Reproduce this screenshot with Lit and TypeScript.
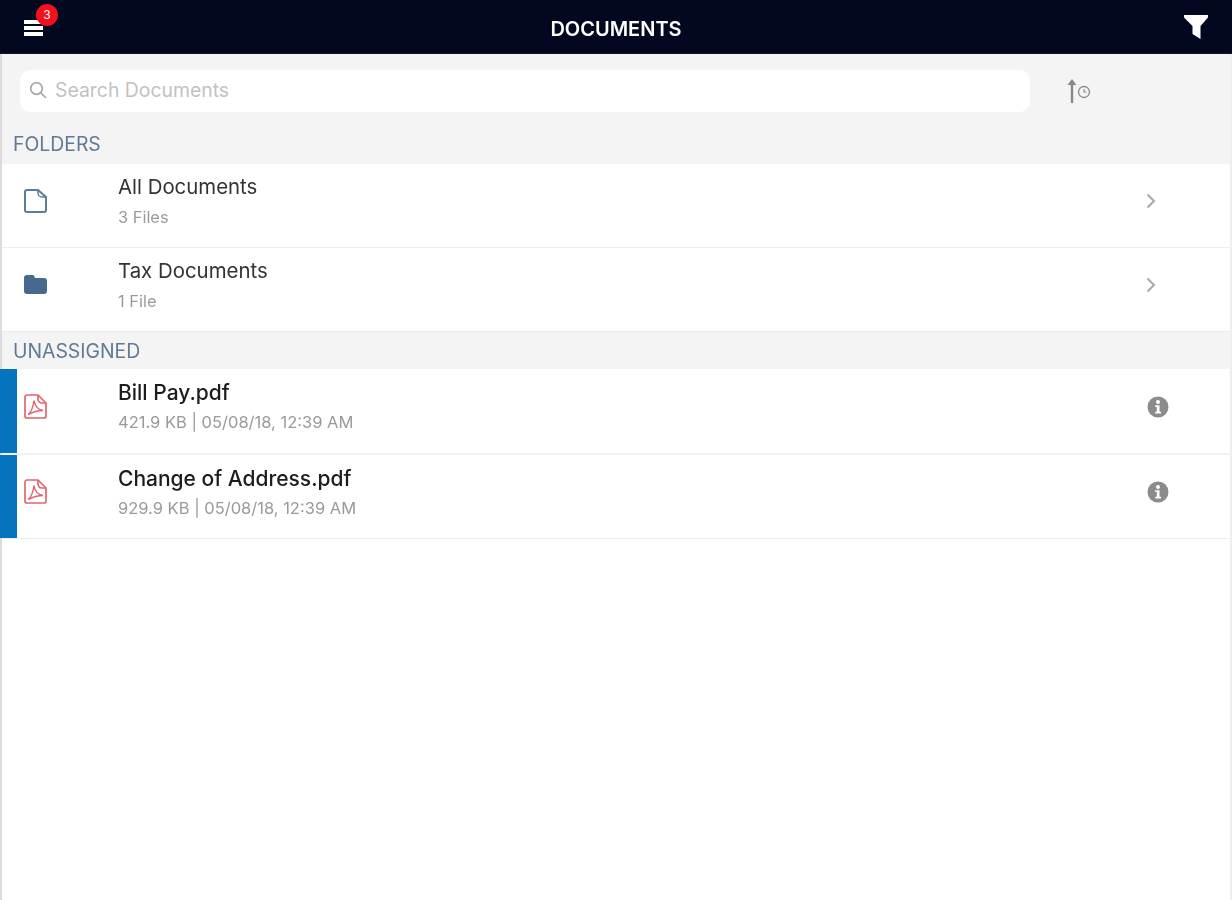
import { LitElement, html, css } from "lit";
import { customElement } from "lit/decorators.js";

const chevron = html`<svg class="trail chev" width="10" height="16" viewBox="0 0 10 16"><path d="M1.500 1.500 L8 8 L1.500 14.500" fill="none" stroke="#a8a8a8" stroke-width="2"/></svg>`;
const info = html`<svg class="trail info" width="22" height="22" viewBox="0 0 22 22"><circle cx="11" cy="11" r="10.500" fill="#8b8b8b"/><circle cx="11" cy="6" r="2" fill="#fff"/><path d="M8.200 9.200h4.300v6.600h1.500v1.700H8.200v-1.700h1.600v-4.900H8.200z" fill="#fff"/></svg>`;
const pdf = html`<svg width="23" height="25" viewBox="0 0 23 25" fill="none" stroke="#e0666c" stroke-width="1.700"><path d="M14 1H3a2 2 0 0 0-2 2v19a2 2 0 0 0 2 2h17a2 2 0 0 0 2-2V9z"/><path d="M14 1v4a4 4 0 0 0 4 4h4"/><path stroke-width="1.400" d="M4 20.500c2.500-1.500 5-7 6-14 .8 5 4 9 9 10-5 0-10 1.500-15 4z"/></svg>`;
const file = html`<svg width="23" height="24" viewBox="0 0 23 24" fill="none" stroke="#5b7c9c" stroke-width="2"><path d="M14 1H3a2 2 0 0 0-2 2v18a2 2 0 0 0 2 2h17a2 2 0 0 0 2-2V8z"/><path stroke-width="1.500" d="M14 1v3a4 4 0 0 0 4 4h4"/></svg>`;
const folder = html`<svg width="23" height="19" viewBox="0 0 23 19"><path fill="#47698c" d="M3 0h5.500a2 2 0 0 1 1.800 1.200L11 3h9a3 3 0 0 1 3 3v10a3 3 0 0 1-3 3H3a3 3 0 0 1-3-3V3a3 3 0 0 1 3-3z"/></svg>`;

@customElement("app-root")
export class AppRoot extends LitElement {
  static styles = css`
    :host { display: block; height: 900px; background: #fff; font-family: Inter, "Liberation Sans", sans-serif; overflow: hidden; }
    .page { height: 900px; display: flex; flex-direction: column; filter: blur(0.7px); }
    header { height: 53px; flex: none; background: #01081f; border-bottom: 1px solid #16181f; display: flex; align-items: center; justify-content: space-between; position: relative; padding: 0 23px 0 24px; }
    .title { color: #fff; font-size: 20px; font-weight: 600; margin-top: 4px; position: absolute; left: 0; right: 0; text-align: center; }
    .menu { width: 19px; height: 16px; margin-top: 2px; position: relative; display: flex; flex-direction: column; justify-content: space-between; }
    .menu i { display: block; height: 4px; background: #fff; }
    .badge { position: absolute; left: 12px; top: -16px; width: 22px; height: 22px; border-radius: 50%; background: #f2101c; color: #fff; font-size: 12px; display: flex; align-items: center; justify-content: center; }
    .funnel { display: block; }
    .body { flex: 1; display: flex; flex-direction: column; border-left: 2px solid #dcdcdc; border-right: 2px solid #eeeeee; }
    .tools { height: 73px; flex: none; box-sizing: border-box; background: #f4f4f4; padding: 16px 0 0 18px; display: flex; align-items: flex-start; }
    .search { width: 1010px; height: 42px; background: #fff; border-radius: 11px; display: flex; align-items: center; gap: 8px; padding: 0 0 2px 9px; box-sizing: border-box; color: #c2c2c2; font-size: 19.400px; }
    .sort { margin: 8px 0 0 36px; }
    .sec { flex: none; height: 37px; background: #f4f4f4; color: #5f7a96; font-size: 19.400px; display: flex; align-items: center; padding-left: 11px; box-sizing: border-box; }
    .sec.a { padding-bottom: 3px; }
    .row { height: 84px; flex: none; box-sizing: border-box; border-bottom: 1px solid #ededed; background: #fff; display: grid; grid-template-columns: 116px 1fr 85px; align-items: center; position: relative; }
    .row.flag { height: 86px; border-bottom: 2px solid #f3f3f3; }
    .row.flag + .row.flag { height: 84px; border-bottom: 1px solid #ededed; }
    .flag .mark { position: absolute; left: -2px; top: 0; bottom: 0; width: 17px; background: #0573bd; }
    .ico { padding: 0 0 10px 22px; display: flex; align-items: center; }
    .name { font-size: 20.400px; color: #333; line-height: 24px; }
    .flag .name { font-size: 21px; color: #1c1c1c; font-weight: 500; }
    .sub { font-size: 16.400px; color: #9a9a9a; margin-top: 9px; line-height: 18px; }
    .flag .sub { font-size: 16.500px; margin-top: 8px; }
    .text { margin-top: -10px; }
    .tr { padding-bottom: 9px; }
    .trail { display: block; }
    .chev { margin-left: 1px; }
    .info { margin-left: 2px; }
  `;

  private row(icon: unknown, name: string, sub: string, trail: unknown, flag = false) {
    return html`<div class="row ${flag ? "flag" : ""}">
      ${flag ? html`<span class="mark"></span>` : ""}
      <div class="ico">${icon}</div>
      <div class="text"><div class="name">${name}</div><div class="sub">${sub}</div></div>
      <div class="tr">${trail}</div>
    </div>`;
  }

  render() {
    return html`<div class="page">
      <header>
        <div class="menu"><i></i><i></i><i></i><span class="badge">3</span></div>
        <div class="title">DOCUMENTS</div>
        <svg class="funnel" width="26" height="26" viewBox="0 0 26 26"><path fill="#fff" d="M1 1h24v2.500L17.500 12v13L9.500 20v-8L1 3.500z"/></svg>
      </header>
      <div class="body">
        <div class="tools">
          <div class="search">
            <svg width="18" height="18" viewBox="0 0 18 18" fill="none" stroke="#a8a8a8" stroke-width="1.700"><circle cx="7.500" cy="7.500" r="5.800"/><path d="M11.800 11.800 17 17"/></svg>
            <span>Search Documents</span>
          </div>
          <svg class="sort" width="26" height="26" viewBox="0 0 26 26" fill="none" stroke="#888"><path d="M6 25V3" stroke-width="2.400"/><path d="M1.500 7 6 1l4.500 6z" fill="#888" stroke="none"/><circle cx="18" cy="14" r="5.500" stroke-width="1.300"/><path d="M18 11v3h2.500" stroke-width="1.100"/></svg>
        </div>
        <div class="sec a">FOLDERS</div>
        ${this.row(file, "All Documents", "3 Files", chevron)}
        ${this.row(folder, "Tax Documents", "1 File", chevron)}
        <div class="sec">UNASSIGNED</div>
        ${this.row(pdf, "Bill Pay.pdf", "421.9 KB | 05/08/18, 12:39 AM", info, true)}
        ${this.row(pdf, "Change of Address.pdf", "929.9 KB | 05/08/18, 12:39 AM", info, true)}
      </div>
    </div>`;
  }
}
